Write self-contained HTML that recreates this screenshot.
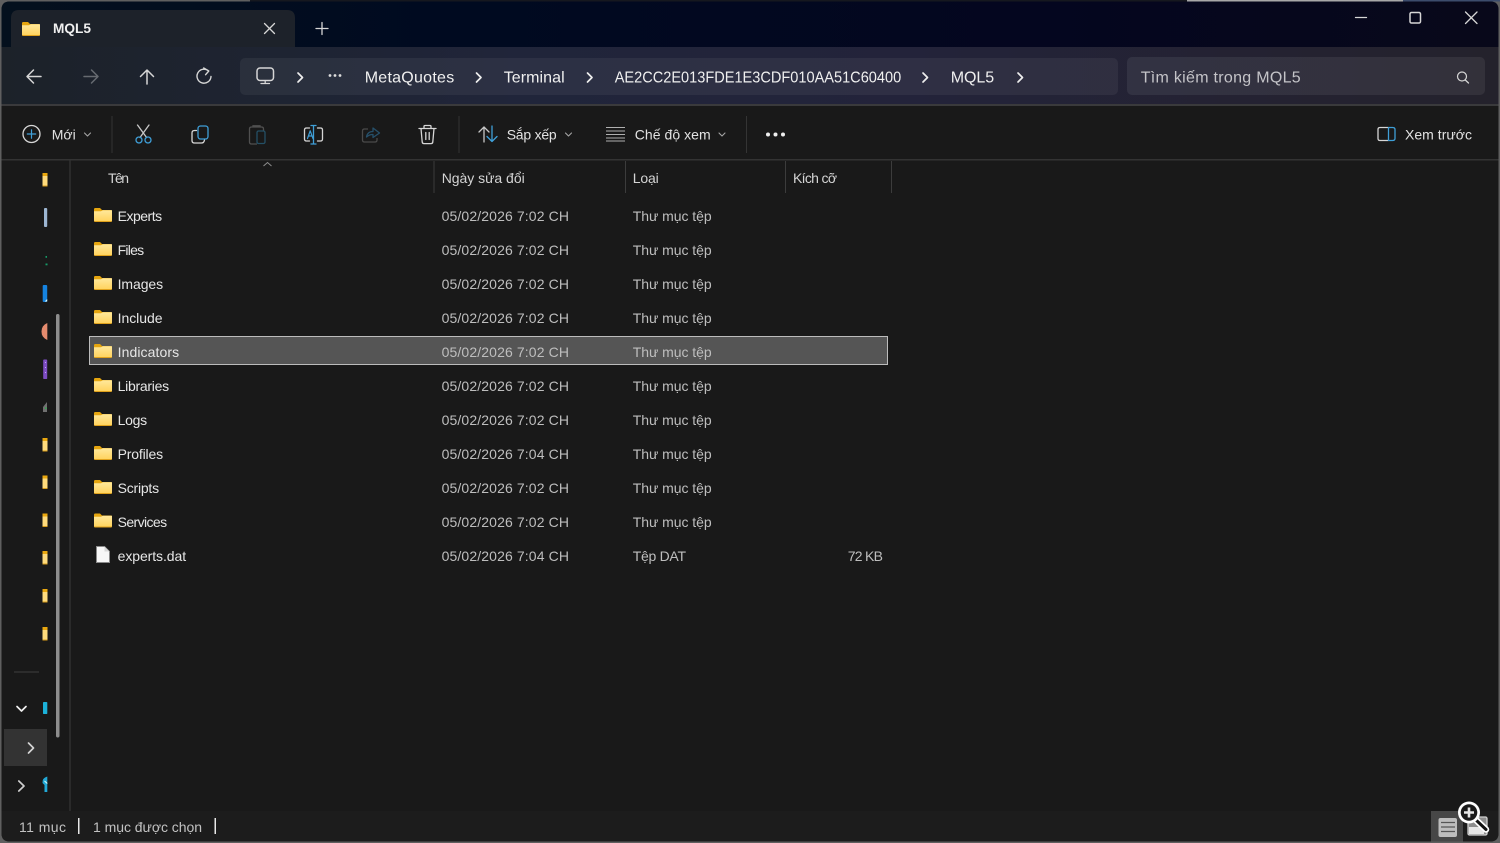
<!DOCTYPE html>
<html lang="vi"><head><meta charset="utf-8"><title>MQL5</title>
<style>
html,body{margin:0;padding:0;background:#6a6a6a;width:1500px;height:843px;overflow:hidden}
svg{display:block;position:absolute;left:0;top:0;stroke-width:1.3}
text{font-family:"Liberation Sans","Noto Sans CJK SC",sans-serif;white-space:pre;stroke:none}
.b{font-size:16px;fill:#f0f0f0}
.t{font-size:14px;fill:#e2e2e2}
.n{font-size:14px;fill:#e6e6e6}
.d{font-size:14px;fill:#bebebe}
.h{font-size:14px;fill:#d4d4d4}
.s{font-size:14px;fill:#c2c2c2}
.i{fill:none;stroke:#d6d6d6;stroke-linecap:round;stroke-linejoin:round}
.bl{fill:none;stroke:#3f9fd8;stroke-linecap:round;stroke-linejoin:round}
</style></head><body>
<svg width="1500" height="843" viewBox="0 0 1500 843" xmlns="http://www.w3.org/2000/svg">
<defs>
<linearGradient id="top" x1="0" x2="1" y1="0" y2="0"><stop offset="0" stop-color="#04101d"/><stop offset=".3" stop-color="#000a20"/><stop offset=".7" stop-color="#04061f"/><stop offset="1" stop-color="#08081a"/></linearGradient>
<linearGradient id="nav" x1="0" x2="1" y1="0" y2="0"><stop offset="0" stop-color="#1c2229"/><stop offset=".35" stop-color="#20253a"/><stop offset=".6" stop-color="#23233a"/><stop offset="1" stop-color="#24222c"/></linearGradient>
<linearGradient id="fg" x1="0" x2="0" y1="0" y2="1"><stop offset="0" stop-color="#ffe89c"/><stop offset="1" stop-color="#ffd25a"/></linearGradient>
<symbol id="folder" viewBox="0 0 18 14" width="18" height="14"><path d="M0 1.2Q0 0 1.2 0H6L8 2H16.8Q18 2 18 3.2V5H0Z" fill="#e5a50f"/><path d="M0 3.2H7L8.8 2.2H18V12.8Q18 14 16.8 14H1.2Q0 14 0 12.8Z" fill="url(#fg)"/><path d="M0 13H18V12.8Q18 14 16.8 14H1.2Q0 14 0 12.8Z" fill="#e0a11c"/></symbol>
<symbol id="bar" viewBox="0 0 6 14" width="6" height="14"><rect x="0" y="0" width="5" height="13.5" rx=".5" fill="#ffdb7c"/><rect x="0" y="0" width="5" height="3" fill="#eaa80f"/><rect x="0" y="12.5" width="5" height="1" fill="#d99c18"/></symbol>
</defs>

<!-- window -->
<rect x="0" y="0" width="1500" height="843" fill="#5f5f5f"/>
<rect x="250" y="0" width="937" height="1.5" fill="#16181f"/>
<rect x="1187" y="0" width="216" height="1.5" fill="#a8a8a8"/>
<rect x="1403" y="0" width="97" height="1.5" fill="#3c4c6c"/>
<rect x="1.5" y="1.5" width="1497" height="840" rx="8" fill="#191919"/>
<path d="M1.5 47V9.5Q1.5 1.5 9.5 1.5H1490.5Q1498.5 1.5 1498.5 9.5V47Z" fill="url(#top)"/>
<rect x="1.5" y="47" width="1497" height="58" fill="url(#nav)"/>
<rect x="1.5" y="104" width="1497" height="2" fill="#3a3a3c"/>
<rect x="1.5" y="159" width="1497" height="1.5" fill="#333"/>
<path d="M1.5 811H1498.5V833.5Q1498.5 841.5 1490.5 841.5H9.5Q1.5 841.5 1.5 833.5Z" fill="#1c1c1c"/>

<!-- tab -->
<path d="M11 47V18Q11 10 19 10H287Q295 10 295 18V47Z" fill="#1d222a"/>
<use href="#folder" x="22" y="22"/>
<text x="53" y="33" font-size="14" font-weight="700" fill="#f0f0f0" textLength="38" lengthAdjust="spacingAndGlyphs">MQL5</text>
<path d="M264.5 23.5L274.5 33.5M274.5 23.5L264.5 33.5" class="i" stroke-width="1.3"/>
<path d="M322 22.5V34.5M316 28.5H328" class="i"/>

<!-- window controls -->
<path d="M1355.5 17.5H1366.5" class="i"/>
<rect x="1410" y="12.5" width="10.5" height="10.5" rx="1.5" class="i" stroke-width="1.5"/>
<path d="M1465.5 12L1477 23.5M1477 12L1465.5 23.5" class="i"/>

<!-- nav -->
<path d="M41 76.5H27.5M33.5 70L27 76.5L33.5 83" class="i" stroke-width="1.5"/>
<path d="M84 76.5H97.5M91.5 70L98 76.5L91.5 83" class="i" style="stroke:#666a70" stroke-width="1.5"/>
<path d="M147 84V70.5M140.5 76.5L147 70L153.5 76.5" class="i" stroke-width="1.5"/>
<path d="M208.5 70.8A7 7 0 1 0 211 76.5M203.7 68L208.8 71L205.6 74.7" class="i" stroke-width="1.4"/>
<rect x="240" y="58" width="878" height="37" rx="5" fill="#ffffff" fill-opacity=".055"/>
<rect x="1127" y="57" width="358" height="38" rx="5" fill="#ffffff" fill-opacity=".07"/>
<rect x="257" y="68" width="16.5" height="12.5" rx="3" class="i" stroke-width="1.5"/>
<path d="M261 83.5H269.5M265.2 81V83.5" class="i"/>
<path d="M298 73L302.5 77.5L298 82" class="i" stroke-width="1.7" style="stroke:#eee"/>
<circle cx="330" cy="75.5" r="1.4" fill="#ddd"/><circle cx="335" cy="75.5" r="1.4" fill="#ddd"/><circle cx="340" cy="75.5" r="1.4" fill="#ddd"/>
<text class="b" x="364.7" y="82.5" textLength="89.5">MetaQuotes</text>
<path d="M476.5 73L481 77.5L476.5 82" class="i" stroke-width="1.7" style="stroke:#eee"/>
<text class="b" x="503.7" y="82.5" textLength="61">Terminal</text>
<path d="M587.5 73L592 77.5L587.5 82" class="i" stroke-width="1.7" style="stroke:#eee"/>
<text class="b" x="614.7" y="82.5" textLength="286.5" lengthAdjust="spacingAndGlyphs">AE2CC2E013FDE1E3CDF010AA51C60400</text>
<path d="M923 73L927.5 77.5L923 82" class="i" stroke-width="1.7" style="stroke:#eee"/>
<text class="b" x="950.7" y="82.5" textLength="43.5">MQL5</text>
<path d="M1018 73L1022.5 77.5L1018 82" class="i" stroke-width="1.7" style="stroke:#eee"/>
<text x="1140.7" y="82.5" font-size="16" fill="#c4c4c8" textLength="160">Tìm kiếm trong MQL5</text>
<circle cx="1462" cy="76.5" r="4.5" class="i" stroke-width="1.2"/><path d="M1465.3 80L1468.5 83" class="i"/>

<!-- toolbar -->
<circle cx="31.5" cy="134" r="8.5" class="i"/><path d="M31.5 129.8V138.2M27.3 134H35.7" class="bl" stroke-width="1.2"/>
<text class="t" x="51.7" y="139.5" textLength="24">Mới</text>
<path d="M84.5 133L87.5 136L90.5 133" class="i" style="stroke:#a5a5a5" stroke-width="1.1"/>
<rect x="111.5" y="116" width="1" height="37" fill="#343434"/>
<path d="M137.5 125L146.6 137.5M149 125L140 137.5" class="i" style="stroke:#c8c8c8"/>
<circle cx="139" cy="140" r="3" class="bl"/><circle cx="148" cy="140" r="3" class="bl"/>
<path d="M196.5 130.5H194.5Q192 130.5 192 133V140.5Q192 143 194.5 143H201.5Q204 143 204.5 140" class="i"/>
<rect x="198" y="126" width="10" height="13" rx="2.5" class="bl"/>
<path d="M257 144H251.5Q249.5 144 249.5 142V129Q249.5 127 251.5 127H261.5Q263.5 127 263.5 129V130.5M253 127V125.8H260V127" fill="none" stroke="#505050" stroke-width="1.3"/>
<rect x="257" y="131" width="8" height="12.5" rx="1.5" fill="none" stroke="#245066" stroke-width="1.3"/>
<path d="M309.5 128H306.5Q304.5 128 304.5 130V139Q304.5 141 306.5 141H309.5M317.5 128H320.5Q322.5 128 322.5 130V139Q322.5 141 320.5 141H317.5" class="i"/>
<path d="M313.5 126V143.5M311 125.5H316M311 144H316" class="bl"/>
<path d="M307.5 138.5L310.2 130.8L313 138.5M308.5 136H312" class="bl" stroke-width="1.2"/>
<path d="M368 129H364.5Q362.5 129 362.5 131V140Q362.5 142 364.5 142H375Q377 142 377 140V138" fill="none" stroke="#4a4a4a" stroke-width="1.3"/>
<path d="M366.5 137Q367.5 131.5 373 131.5V128L379.5 133L373 137.5V134.5Q369.5 134.3 366.5 137Z" fill="none" stroke="#26506a" stroke-width="1.3" stroke-linejoin="round"/>
<path d="M419 128.5H436M424 128V126.5Q424 125.5 425 125.5H430Q431 125.5 431 126.5V128M421 128.5L422.2 142Q422.4 143.6 424 143.6H431Q432.6 143.6 432.8 142L434 128.5M425.8 132.5V139.5M429.2 132.5V139.5" class="i"/>
<rect x="458.5" y="116" width="1" height="37" fill="#343434"/>
<path d="M484 142V127M479 132L484 127L489 132" class="i" style="stroke:#c8c8c8"/>
<path d="M492 126V141.5M487 136.5L492 141.5L497 136.5" class="bl"/>
<text class="t" x="506.7" y="139.5" textLength="50">Sắp xếp</text>
<path d="M565.5 133L568.5 136L571.5 133" class="i" style="stroke:#a5a5a5" stroke-width="1.1"/>
<path d="M606 127.5H625M606 131H625M606 134.5H625M606 138H625M606 141H625" fill="none" stroke="#b0b0b0" stroke-width="1"/>
<text class="t" x="634.7" y="139.5" textLength="76">Chế độ xem</text>
<path d="M719 133L722 136L725 133" class="i" style="stroke:#a5a5a5" stroke-width="1.1"/>
<rect x="746" y="116" width="1" height="37" fill="#343434"/>
<circle cx="768" cy="134.5" r="2" fill="#eee"/><circle cx="775.5" cy="134.5" r="2" fill="#eee"/><circle cx="783" cy="134.5" r="2" fill="#eee"/>
<path d="M1388 127.5H1380Q1378 127.5 1378 129.5V138.5Q1378 140.5 1380 140.5H1388" class="i"/>
<path d="M1388.5 127.5H1392.5Q1395 127.5 1395 129.5V138.5Q1395 140.5 1392.5 140.5H1388.5Z" class="bl"/>
<text class="t" x="1405" y="139.5" textLength="67">Xem trước</text>

<!-- sidebar -->
<g>
<use href="#bar" x="42.5" y="173"/>
<rect x="44" y="208" width="3.2" height="19" rx="1" fill="#9db6d2"/>
<rect x="45.5" y="256" width="1.5" height="1.8" fill="#159a68"/><rect x="45.5" y="263.5" width="2" height="1.8" fill="#159a68"/>
<rect x="42.7" y="285" width="4.5" height="17" rx="1" fill="#1583e0"/><path d="M47.2 299L44.7 301.5H47.2Z" fill="#dff"/>
<path d="M47.3 323Q41.5 325.5 41.5 331.5Q41.5 337.5 47.3 340Z" fill="#e58b6e"/>
<rect x="43.2" y="359.5" width="4" height="19.5" rx=".8" fill="#7d4dc2"/><path d="M45.5 362v1M45.5 367v1M45.5 372v1" stroke="#c4a2ff" stroke-width="1"/>
<path d="M43 407L47 402V412H43Z" fill="#707070"/><rect x="45" y="407.5" width="1.5" height="1.5" fill="#27b04a"/>
<use href="#bar" x="42.5" y="438"/><use href="#bar" x="42.5" y="475.5"/><use href="#bar" x="42.5" y="513.5"/><use href="#bar" x="42.5" y="551"/><use href="#bar" x="42.5" y="589"/><use href="#bar" x="42.5" y="627"/>
<rect x="14" y="671.5" width="25" height="1" fill="#3f3f3f"/>
<path d="M17 706.5L21.5 711L26 706.5" fill="none" stroke="#f0f0f0" stroke-width="1.7" stroke-linecap="round" stroke-linejoin="round"/>
<rect x="43" y="702" width="4.3" height="12" rx=".8" fill="#1cb2d9"/>
<rect x="4" y="729" width="43" height="37" fill="#333"/>
<path d="M28.5 743L33.5 748L28.5 753" fill="none" stroke="#d4d4d4" stroke-width="1.7" stroke-linecap="round" stroke-linejoin="round"/>
<path d="M18.8 781L24 786L18.8 791" fill="none" stroke="#cfcfcf" stroke-width="1.7" stroke-linecap="round" stroke-linejoin="round"/>
<path d="M47.3 776.5Q42 778 42.5 783L44.5 785V792H47.3Z" fill="#22a9d6"/><path d="M44.5 781L47.3 783.5" stroke="#dff" stroke-width="1"/>
</g>
<rect x="56" y="314" width="3.5" height="423.5" rx="1.7" fill="#8d8d8d"/>
<rect x="69" y="160.5" width="2" height="650.5" fill="#2a2a2a"/>

<!-- header -->
<path d="M263.5 166L267.5 162.5L271.5 166" fill="none" stroke="#8d8d8d" stroke-width="1"/>
<text class="h" x="108" y="183" textLength="21">Tên</text>
<text class="h" x="441.7" y="183" textLength="83">Ngày sửa đổi</text>
<text class="h" x="632.7" y="183" textLength="26">Loại</text>
<text class="h" x="793" y="183" textLength="44">Kích cỡ</text>
<rect x="433.5" y="161" width="1" height="32" fill="#3c3c3c"/>
<rect x="625" y="161" width="1" height="32" fill="#3c3c3c"/>
<rect x="785" y="161" width="1" height="32" fill="#3c3c3c"/>
<rect x="891" y="161" width="1" height="32" fill="#3c3c3c"/>

<!-- selected -->
<rect x="89.5" y="336.5" width="798" height="28" fill="#555" stroke="#bcbcbc" stroke-width="1"/>

<!-- rows -->
<use href="#folder" x="94" y="208"/><text class="n" x="117.6" y="221" textLength="44.5">Experts</text><text class="d" x="441.6" y="221" textLength="127.4">05/02/2026 7:02 CH</text><text class="d" x="632.7" y="221" textLength="79">Thư mục tệp</text>
<use href="#folder" x="94" y="242"/><text class="n" x="117.6" y="255" textLength="26.5">Files</text><text class="d" x="441.6" y="255" textLength="127.4">05/02/2026 7:02 CH</text><text class="d" x="632.7" y="255" textLength="79">Thư mục tệp</text>
<use href="#folder" x="94" y="276"/><text class="n" x="117.6" y="289" textLength="45.5">Images</text><text class="d" x="441.6" y="289" textLength="127.4">05/02/2026 7:02 CH</text><text class="d" x="632.7" y="289" textLength="79">Thư mục tệp</text>
<use href="#folder" x="94" y="310"/><text class="n" x="117.6" y="323" textLength="45">Include</text><text class="d" x="441.6" y="323" textLength="127.4">05/02/2026 7:02 CH</text><text class="d" x="632.7" y="323" textLength="79">Thư mục tệp</text>
<use href="#folder" x="94" y="344"/><text class="n" x="117.6" y="357" textLength="61.5">Indicators</text><text class="d" x="441.6" y="357" textLength="127.4">05/02/2026 7:02 CH</text><text class="d" x="632.7" y="357" textLength="79">Thư mục tệp</text>
<use href="#folder" x="94" y="378"/><text class="n" x="117.6" y="391" textLength="51.5">Libraries</text><text class="d" x="441.6" y="391" textLength="127.4">05/02/2026 7:02 CH</text><text class="d" x="632.7" y="391" textLength="79">Thư mục tệp</text>
<use href="#folder" x="94" y="412"/><text class="n" x="117.6" y="425" textLength="29.5">Logs</text><text class="d" x="441.6" y="425" textLength="127.4">05/02/2026 7:02 CH</text><text class="d" x="632.7" y="425" textLength="79">Thư mục tệp</text>
<use href="#folder" x="94" y="446"/><text class="n" x="117.6" y="459" textLength="45.5">Profiles</text><text class="d" x="441.6" y="459" textLength="127.4">05/02/2026 7:04 CH</text><text class="d" x="632.7" y="459" textLength="79">Thư mục tệp</text>
<use href="#folder" x="94" y="480"/><text class="n" x="117.6" y="493" textLength="41.5">Scripts</text><text class="d" x="441.6" y="493" textLength="127.4">05/02/2026 7:02 CH</text><text class="d" x="632.7" y="493" textLength="79">Thư mục tệp</text>
<use href="#folder" x="94" y="513.5"/><text class="n" x="117.6" y="527" textLength="49.5">Services</text><text class="d" x="441.6" y="527" textLength="127.4">05/02/2026 7:02 CH</text><text class="d" x="632.7" y="527" textLength="79">Thư mục tệp</text>
<path d="M96.5 546.5H104.5L109.5 551.5V562.5H96.5Z" fill="#f7f7f7" stroke="#8a8a8a" stroke-width="1"/><path d="M104.5 546.5V551.5H109.5" fill="#d8d8d8"/>
<text class="n" x="117.6" y="561" textLength="68.5">experts.dat</text><text class="d" x="441.6" y="561" textLength="127.4">05/02/2026 7:04 CH</text><text class="d" x="632.7" y="561" textLength="53.3">Tệp DAT</text><text class="d" x="847.7" y="561" textLength="35.3">72 KB</text>

<!-- status -->
<text class="s" x="19" y="832" textLength="47">11 mục</text>
<rect x="78" y="818" width="1.5" height="16" fill="#e8e8e8"/>
<text class="s" x="93" y="832" textLength="109">1 mục được chọn</text>
<rect x="214.5" y="818" width="1.5" height="16" fill="#e8e8e8"/>

<!-- view toggles -->
<rect x="1431" y="811" width="32" height="30.5" fill="#474747"/>
<rect x="1438.5" y="818" width="18.5" height="19" rx="2" fill="#bdbdbd"/>
<path d="M1441 822.5H1455M1441 827H1455M1441 831.5H1455" stroke="#555" stroke-width="1.2"/>
<rect x="1468" y="817" width="19" height="18" rx="1.5" fill="#8c8c8c" stroke="#d0d0d0"/>
<rect x="1469" y="827" width="15" height="7" fill="#e6e6e6"/>
<!-- magnifier -->
<path d="M1476 820L1486 829.5" stroke="#fff" stroke-width="6.5" stroke-linecap="round"/>
<path d="M1476 820L1486 829.5" stroke="#111" stroke-width="3" stroke-linecap="round"/>
<circle cx="1469" cy="812.5" r="11" fill="#fff"/>
<circle cx="1469" cy="812.5" r="8.3" fill="#1a1a1a"/>
<path d="M1469 807.5V817.5M1464 812.5H1474" stroke="#e6e6e6" stroke-width="2.6"/>
</svg>
</body></html>
